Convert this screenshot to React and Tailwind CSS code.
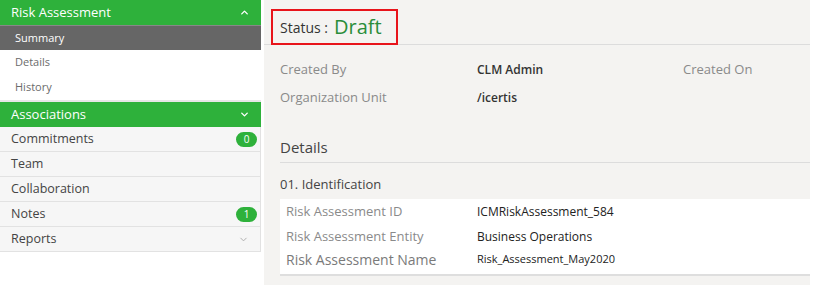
import { ChevronUp, ChevronDown } from "lucide-react";

const subItems = ["Summary", "Details", "History"];

const assocItems = [
  { label: "Commitments", badge: "0" },
  { label: "Team" },
  { label: "Collaboration" },
  { label: "Notes", badge: "1" },
  { label: "Reports", chevron: true },
];

const Sidebar = () => (
  <aside className="w-[261px] shrink-0 bg-white">
    <div className="h-[25px] bg-[#2eb13b] flex items-center justify-between pl-[11px] pr-[11px] text-white text-[13px]">
      <span>Risk Assessment</span>
      <ChevronUp className="size-[11px]" strokeWidth={3} />
    </div>
    {subItems.map((item, i) => (
      <div
        key={item}
        className={`h-[25px] flex items-center pl-[15px] text-[11px] ${
          i === 0 ? "bg-[#666666] text-white border-t border-[#888]" : "text-[#6b6b6b]"
        }`}
      >
        {item}
      </div>
    ))}
    <div className="h-[2px] bg-[#e6e6e6]" />
    <div className="h-[25px] bg-[#2eb13b] flex items-center justify-between pl-[11px] pr-[11px] text-white text-[13px]">
      <span>Associations</span>
      <ChevronDown className="size-[11px]" strokeWidth={3} />
    </div>
    {assocItems.map((item) => (
      <div
        key={item.label}
        className="h-[25px] flex items-center justify-between pl-[11px] pr-[3px] bg-[#f6f6f6] border-b border-r border-[#e2e2e2] text-[12.5px] text-[#444]"
      >
        <span>{item.label}</span>
        {item.badge && (
          <span className="w-[21px] h-[15px] rounded-full bg-[#2eb13b] text-white text-[10px] flex items-center justify-center">
            {item.badge}
          </span>
        )}
        {item.chevron && <ChevronDown className="size-[11px] mr-[8px] text-[#aaa]" strokeWidth={2} />}
      </div>
    ))}
  </aside>
);

const InfoRow = ({ label, value, extra }) => (
  <div className="h-[28px] flex items-center text-[13px]">
    <span className="w-[197px] text-[#8a8a8a]">{label}</span>
    <span className="w-[206px] text-[#333] font-semibold text-[12px]">{value}</span>
    {extra && <span className="text-[#8a8a8a]">{extra}</span>}
  </div>
);

const CardRow = ({ label, value, big }) => (
  <div className={`flex items-center pl-[6px] ${big ? "h-[20px] text-[14px]" : "h-[25px] text-[13px]"}`}>
    <span className={`w-[191px] ${big ? "text-[#7a7a7a]" : "text-[#8a8a8a]"}`}>{label}</span>
    <span className={`text-[#222] font-medium ${big ? "text-[11px]" : "text-[12px]"}`}>{value}</span>
  </div>
);

export default function App() {
  return (
    <div className="w-[817px] h-[285px] flex bg-white font-['Open_Sans',sans-serif] overflow-hidden">
      <Sidebar />
      <div className="w-[3px]" />
      <main className="w-[546px] h-full bg-[#f4f3f1] pt-[9px]">
        <div className="flex border-b border-[#dcdcdc] h-[36px]">
          <div className="ml-[7px] w-[127px] h-[36px] border-2 border-[#e8141b] flex items-center pl-[7px] gap-[6px]">
            <span className="text-[14px] text-[#333]">Status :</span>
            <span className="text-[20px] text-[#2a8d3a]">Draft</span>
          </div>
        </div>
        <div className="pl-[16px] pt-[11px]">
          <InfoRow label="Created By" value="CLM Admin" extra="Created On" />
          <InfoRow label="Organization Unit" value="/icertis" />
        </div>
        <div className="ml-[16px] mt-[20px] h-[31px] flex items-center border-b border-[#dcdcdc] text-[15px] text-[#444]">
          Details
        </div>
        <div className="ml-[16px] h-[36px] flex items-center pt-[8px] text-[13px] text-[#444]">
          01. Identification
        </div>
        <div className="ml-[16px] bg-white border-b-2 border-[#dedede] pb-[5px]">
          <CardRow label="Risk Assessment ID" value="ICMRiskAssessment_584" />
          <CardRow label="Risk Assessment Entity" value="Business Operations" />
          <CardRow label="Risk Assessment Name" value="Risk_Assessment_May2020" big />
        </div>
      </main>
    </div>
  );
}
